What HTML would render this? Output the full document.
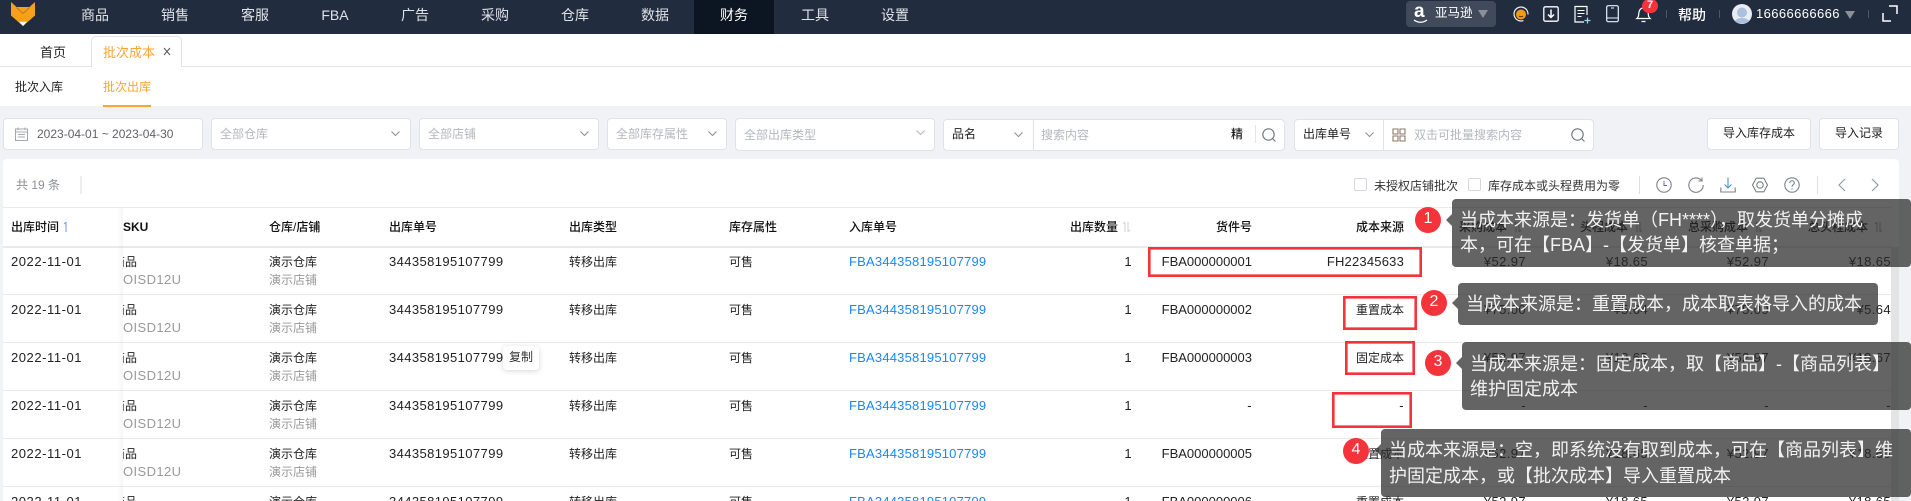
<!DOCTYPE html>
<html lang="zh">
<head>
<meta charset="utf-8">
<title>批次成本</title>
<style>
html,body{margin:0;padding:0;width:1911px;height:501px;overflow:hidden;background:#f0f2f5}
body{position:relative;font:12px "Liberation Sans","Noto Sans CJK SC",sans-serif;color:#222}
*{box-sizing:border-box}
.a{position:absolute;white-space:nowrap}
svg{position:absolute;display:block;overflow:visible}
#nav{position:absolute;left:0;top:0;width:1911px;height:34px;background:#212d3f}
#nav .m{position:absolute;top:0;width:80px;height:34px;line-height:31px;text-align:center;color:#dfe3e8;font-size:14px}
#nav .on{background:#0c1622;color:#fff}
.sep{position:absolute;width:1px;background:#4c5666}
.box{position:absolute;background:#fff;border:1px solid #dfe2e8;border-radius:4px}
.ph{color:#b4b7bd;line-height:16px}
.line{position:absolute;left:3px;width:1888px;height:1px;background:#e8eaee}
.row{position:absolute;left:0;width:1899px;height:48px;font-size:12px;overflow:hidden}
.row .t,.row .b,.row .r{position:absolute;white-space:nowrap;line-height:16px;top:7px}
.row .b{top:25px;color:#999}
.n{font-size:13px;letter-spacing:.4px}
.d{letter-spacing:.55px}
.row .z{letter-spacing:0}
.h{position:absolute;top:219px;line-height:16px;font-weight:500;color:#111;white-space:nowrap}
.link{color:#1c86f2;font-size:13px;letter-spacing:.2px}
.red{position:absolute;box-shadow:inset 0 0 0 2.6px #f5333a;z-index:6}
.call{position:absolute;background:rgba(40,40,40,.72);border-radius:4px;z-index:7;color:#f2f2f2;font-size:18px;line-height:25px;white-space:nowrap}
.call:before{content:"";position:absolute;left:-6px;top:var(--ty);border:6px solid transparent;border-left:0;border-right-color:rgba(40,40,40,.72)}
.dot{position:absolute;width:26px;height:26px;border-radius:50%;background:#f5333a;color:#fff;text-align:center;font-size:16px;line-height:24px;z-index:8}
</style>
</head>
<body>

<!-- NAV -->
<div id="nav">
<svg style="left:0;top:0" width="60" height="34" viewBox="0 0 60 34"><path d="M11 2l5.500 5h13L35 2v13.500L23 26 11 15.500z" fill="#f9a01b"/><path d="M16.500 7.500L23 13.500l6.500-6" fill="none" stroke="#b97a1c" stroke-width="1"/><path d="M19 21.800h8L23 26z" fill="#fff"/></svg>
<div class="m" style="left:55px">商品</div>
<div class="m" style="left:135px">销售</div>
<div class="m" style="left:215px">客服</div>
<div class="m" style="left:295px">FBA</div>
<div class="m" style="left:375px">广告</div>
<div class="m" style="left:455px">采购</div>
<div class="m" style="left:535px">仓库</div>
<div class="m" style="left:615px">数据</div>
<div class="m on" style="left:694px">财务</div>
<div class="m" style="left:775px">工具</div>
<div class="m" style="left:855px">设置</div>

<div class="a" style="left:1406px;top:1px;width:90px;height:26px;background:#414a5a;border-radius:4px"></div>
<div class="a" style="left:1414px;top:2px;font:700 19px/20px 'Liberation Sans',sans-serif;color:#fff">a</div>
<svg style="left:1413px;top:19px" width="16" height="5" viewBox="0 0 16 5"><path d="M1 1c4 3 9 3 13 0" fill="none" stroke="#fff" stroke-width="1.300"/></svg>
<div class="a" style="left:1435px;top:5px;line-height:17px;color:#fff;font-size:12.500px">亚马逊</div>
<svg style="left:1478px;top:10px" width="10" height="8" viewBox="0 0 10 8"><path d="M0 0h10L5 8z" fill="#8b9097"/></svg>

<svg style="left:1512px;top:5px" width="18" height="18" viewBox="0 0 18 18"><circle cx="9" cy="9" r="7" fill="none" stroke="#eee" stroke-width="1.200" stroke-dasharray="26 8" transform="rotate(150 9 9)"/><circle cx="9" cy="9.500" r="5" fill="#f59a14"/><path d="M7 11c1 1 3 1 4 0" stroke="#4a3205" fill="none"/></svg>
<svg style="left:1543px;top:6px" width="16" height="16" viewBox="0 0 16 16"><rect x=".8" y=".8" width="14.400" height="14.400" rx="1.500" fill="none" stroke="#fff" stroke-width="1.300"/><path d="M8 3.500v8M5 8.500l3 3 3-3" fill="none" stroke="#fff" stroke-width="1.500"/></svg>
<svg style="left:1574px;top:5px" width="17" height="19" viewBox="0 0 17 19"><path d="M13 10V1.500H1V17h9" fill="none" stroke="#fff" stroke-width="1.200"/><path d="M3.500 5.500h7M3.500 8.500h7M3.500 11.500h4" stroke="#fff"/><path d="M13.500 12.500v6M10.500 15.500h6" stroke="#9fd4f2" stroke-width="1.200"/></svg>
<svg style="left:1606px;top:5px" width="13" height="18" viewBox="0 0 13 18"><rect x=".7" y=".7" width="11.600" height="16" rx="1.500" fill="none" stroke="#e8f3fa" stroke-width="1.200"/><path d="M1 13h11M5 3h3" stroke="#e8f3fa"/></svg>
<svg style="left:1636px;top:5px" width="15" height="18" viewBox="0 0 15 18"><path d="M1 13.500c2-1.500 1.500-4 2-6.500 .6-2.800 2.500-4 4.500-4s3.900 1.200 4.500 4c.5 2.500 0 5 2 6.500z" fill="none" stroke="#fff" stroke-width="1.200"/><path d="M5.500 16.500h4" stroke="#fff" stroke-width="1.300"/></svg>
<div class="a" style="left:1642px;top:-1px;width:16px;height:14px;border-radius:8px;background:#f5333a;color:#fff;text-align:center;font-size:11px;font-weight:700;line-height:13px">7</div>

<div class="sep" style="left:1666px;top:10px;height:8px"></div>
<div class="a" style="left:1678px;top:6px;line-height:19px;color:#fff;font-size:14px;font-weight:500">帮助</div>
<div class="sep" style="left:1719px;top:10px;height:8px"></div>
<svg style="left:1732px;top:4px" width="20" height="20" viewBox="0 0 20 20"><circle cx="10" cy="10" r="10" fill="#e9edf3"/><circle cx="10" cy="8.500" r="5" fill="#a9c0de"/><path d="M3 17c2-4 12-4 14 0-3 3.500-11 3.500-14 0z" fill="#a9c0de"/></svg>
<div class="a" style="left:1756px;top:5px;line-height:17px;color:#fff;font-size:13px;letter-spacing:.4px">16666666666</div>
<svg style="left:1845px;top:11px" width="10" height="8" viewBox="0 0 10 8"><path d="M0 0h10L5 8z" fill="#8b9097"/></svg>
<div class="sep" style="left:1868px;top:10px;height:8px"></div>
<svg style="left:1882px;top:5px" width="16" height="17" viewBox="0 0 16 17"><path d="M7 1h8v8M9 16H1V8" fill="none" stroke="#fff" stroke-width="1.500"/></svg>
</div>

<!-- TAB BAR -->
<div class="a" style="left:0;top:34px;width:1911px;height:72px;background:#fff"></div>
<div class="a" style="left:0;top:66px;width:1911px;height:1px;background:#dfe2e8"></div>
<div class="a" style="left:91px;top:36px;width:91px;height:31px;background:#fff;border:1px solid #dfe2e8;border-bottom:0;border-radius:5px 5px 0 0"></div>
<div class="a" style="left:40px;top:44px;line-height:17px;font-size:13px;color:#222">首页</div>
<div class="a" style="left:103px;top:44px;line-height:17px;font-size:13px;color:#f9a62f">批次成本</div>
<svg style="left:163px;top:47px" width="8" height="9" viewBox="0 0 8 9"><path d="M1 1l6 7M7 1L1 8" stroke="#555" stroke-width="1"/></svg>
<div class="a" style="left:15px;top:79px;line-height:16px;color:#222">批次入库</div>
<div class="a" style="left:103px;top:79px;line-height:16px;color:#f9a62f">批次出库</div>
<div class="a" style="left:103px;top:105px;width:48px;height:2px;background:#f9a62f"></div>

<!-- FILTERS -->
<div class="box" style="left:3px;top:118px;width:200px;height:32px"></div>
<svg style="left:15px;top:127px" width="13" height="14" viewBox="0 0 13 14"><path d="M.5 2h12v11.500H.5zM.5 5h12M3 .5v2.500M10 .5v2.500M3 7.500h7M3 10h7" fill="none" stroke="#a5a8ae"/></svg>
<div class="a" style="left:37px;top:126px;line-height:16px;color:#606266">2023-04-01 ~ 2023-04-30</div>

<div class="box" style="left:211px;top:118px;width:200px;height:32px"></div>
<div class="a ph" style="left:220px;top:126px">全部仓库</div>
<svg style="left:391px;top:131px" width="9" height="6" viewBox="0 0 9 6"><path d="M.5.500l4 4 4-4" fill="none" stroke="#8e9197" stroke-width="1.100"/></svg>

<div class="box" style="left:419px;top:118px;width:180px;height:32px"></div>
<div class="a ph" style="left:428px;top:126px">全部店铺</div>
<svg style="left:580px;top:131px" width="9" height="6" viewBox="0 0 9 6"><path d="M.5.500l4 4 4-4" fill="none" stroke="#8e9197" stroke-width="1.100"/></svg>

<div class="box" style="left:607px;top:118px;width:120px;height:32px"></div>
<div class="a ph" style="left:616px;top:126px">全部库存属性</div>
<svg style="left:708px;top:131px" width="9" height="6" viewBox="0 0 9 6"><path d="M.5.500l4 4 4-4" fill="none" stroke="#8e9197" stroke-width="1.100"/></svg>

<div class="box" style="left:735px;top:118px;width:200px;height:33px"></div>
<div class="a ph" style="left:744px;top:127px">全部出库类型</div>
<svg style="left:916px;top:130px" width="9" height="6" viewBox="0 0 9 6"><path d="M.5.500l4 4 4-4" fill="none" stroke="#b4b7bd" stroke-width="1.100"/></svg>

<div class="box" style="left:943px;top:119px;width:342px;height:32px"></div>
<div class="a" style="left:1033px;top:119px;width:1px;height:32px;background:#dfe2e8"></div>
<div class="a" style="left:952px;top:126px;line-height:16px;color:#222">品名</div>
<svg style="left:1014px;top:132px" width="9" height="6" viewBox="0 0 9 6"><path d="M.5.500l4 4 4-4" fill="none" stroke="#8e9197" stroke-width="1.100"/></svg>
<div class="a ph" style="left:1041px;top:127px">搜索内容</div>
<div class="a" style="left:1231px;top:126px;line-height:16px;font-weight:500;color:#222">精</div>
<div class="a" style="left:1255px;top:125px;width:1px;height:18px;background:#e3e5ea"></div>
<svg style="left:1262px;top:128px" width="14" height="14" viewBox="0 0 14 14"><circle cx="6.500" cy="6.500" r="5.700" fill="none" stroke="#6f7378" stroke-width="1.100"/><path d="M10.500 10.500l3 3" stroke="#6f7378" stroke-width="1.100"/></svg>

<div class="box" style="left:1294px;top:119px;width:300px;height:32px"></div>
<div class="a" style="left:1383px;top:119px;width:1px;height:32px;background:#dfe2e8"></div>
<div class="a" style="left:1303px;top:126px;line-height:16px;color:#222">出库单号</div>
<svg style="left:1365px;top:132px" width="9" height="6" viewBox="0 0 9 6"><path d="M.5.500l4 4 4-4" fill="none" stroke="#8e9197" stroke-width="1.100"/></svg>
<svg style="left:1392px;top:128px" width="14" height="14" viewBox="0 0 14 14"><path d="M1 1h5v5H1zM8 1h5v5H8zM1 8h5v5H1zM8 8h5v5H8z" fill="none" stroke="#8a7a6a" stroke-width="1.100"/></svg>
<div class="a ph" style="left:1414px;top:127px">双击可批量搜索内容</div>
<svg style="left:1571px;top:128px" width="14" height="14" viewBox="0 0 14 14"><circle cx="6.500" cy="6.500" r="5.700" fill="none" stroke="#6f7378" stroke-width="1.100"/><path d="M10.500 10.500l3 3" stroke="#6f7378" stroke-width="1.100"/></svg>

<div class="box" style="left:1707px;top:118px;width:104px;height:32px;text-align:center;line-height:29px;color:#222">导入库存成本</div>
<div class="box" style="left:1819px;top:118px;width:80px;height:32px;text-align:center;line-height:29px;color:#222">导入记录</div>

<!-- CARD -->
<div class="a" style="left:3px;top:159px;width:1896px;height:342px;background:#fff;border-radius:4px 4px 0 0"></div>
<div class="a" style="left:16px;top:177px;line-height:16px;color:#8d8f94;font-size:12px">共 19 条</div>
<div class="a" style="left:80px;top:176px;width:2px;height:18px;background:#eceef1"></div>

<div class="a" style="left:1354px;top:178px;width:13px;height:13px;border:1px solid #d5d7dc;border-radius:2px;background:#fff"></div>
<div class="a" style="left:1374px;top:178px;line-height:16px;color:#333">未授权店铺批次</div>
<div class="a" style="left:1468px;top:178px;width:13px;height:13px;border:1px solid #d5d7dc;border-radius:2px;background:#fff"></div>
<div class="a" style="left:1488px;top:178px;line-height:16px;color:#333">库存成本或头程费用为零</div>
<div class="a" style="left:1639px;top:176px;width:1px;height:18px;background:#dcdfe4"></div>

<svg style="left:1656px;top:177px" width="16" height="16" viewBox="0 0 16 16"><circle cx="8" cy="8" r="7.200" fill="none" stroke="#7d8084" stroke-width="1.100"/><path d="M8 4v4.500h3" fill="none" stroke="#7a5c98"/></svg>
<svg style="left:1688px;top:177px" width="16" height="16" viewBox="0 0 16 16"><path d="M13.500 3.500A7.200 7.200 0 1 0 15.200 8M14 .5v3.500h-3.500" fill="none" stroke="#7d8084" stroke-width="1.100"/></svg>
<svg style="left:1720px;top:177px" width="16" height="16" viewBox="0 0 16 16"><path d="M8 .5v10M4.500 7.500L8 11l3.500-3.500" fill="none" stroke="#4d8fd6" stroke-width="1.100"/><path d="M.8 10.500v4.500h14.400v-4.500" fill="none" stroke="#7d8084" stroke-width="1.100"/></svg>
<svg style="left:1752px;top:177px" width="16" height="16" viewBox="0 0 16 16"><path d="M4.200 1.200h7.600L15.500 8l-3.700 6.800H4.200L.5 8z" fill="none" stroke="#7d8084" stroke-width="1.100"/><circle cx="8" cy="8" r="3.200" fill="none" stroke="#7d8084" stroke-width="1.100"/></svg>
<svg style="left:1784px;top:177px" width="16" height="16" viewBox="0 0 16 16"><circle cx="8" cy="8" r="7.200" fill="none" stroke="#7d8084" stroke-width="1.100"/><path d="M5.800 6c0-3 4.500-3 4.500 0 0 1.700-2.300 1.800-2.300 3.800M8 11.300v1.200" fill="none" stroke="#7d8084" stroke-width="1.100"/></svg>
<div class="a" style="left:1817px;top:176px;width:1px;height:18px;background:#dcdfe4"></div>
<svg style="left:1838px;top:178px" width="8" height="14" viewBox="0 0 8 14"><path d="M7 1L1 7l6 6" fill="none" stroke="#8b97a5" stroke-width="1.100"/></svg>
<svg style="left:1871px;top:178px" width="8" height="14" viewBox="0 0 8 14"><path d="M1 1l6 6-6 6" fill="none" stroke="#8b97a5" stroke-width="1.100"/></svg>

<!-- TABLE LINES -->
<div class="line" style="top:207px"></div>
<div class="line" style="top:246px;height:2px"></div>
<div class="line" style="top:294px"></div>
<div class="line" style="top:342px"></div>
<div class="line" style="top:390px"></div>
<div class="line" style="top:438px"></div>
<div class="line" style="top:486px"></div>

<!-- HEADER -->
<div class="h" style="left:11px">出库时间</div>
<svg style="left:63px;top:221px" width="5" height="12" viewBox="0 0 5 12"><path d="M3 1v10" stroke="#7aa8f2" stroke-width="1.200"/><path d="M3 1L1 3" stroke="#7aa8f2"/></svg>
<div class="h" style="left:123px;overflow:hidden;font-weight:700">SKU</div>
<div class="h" style="left:269px">仓库/店铺</div>
<div class="h" style="left:389px">出库单号</div>
<div class="h" style="left:569px">出库类型</div>
<div class="h" style="left:729px">库存属性</div>
<div class="h" style="left:849px">入库单号</div>
<div class="h" style="left:1070px">出库数量</div>
<svg style="left:1122px;top:221px" width="9" height="12" viewBox="0 0 9 12"><path d="M3 1v10M3 1L1 3M6 1v10M6 11l2-2" fill="none" stroke="#d4d6da" stroke-width="1.100"/></svg>
<div class="h" style="left:1216px">货件号</div>
<div class="h" style="left:1356px">成本来源</div>
<div class="h" style="left:1459px">采购成本</div>
<svg style="left:1513px;top:221px" width="9" height="12" viewBox="0 0 9 12"><path d="M3 1v10M3 1L1 3M6 1v10M6 11l2-2" fill="none" stroke="#aaa" stroke-width="1.100"/></svg>
<div class="h" style="left:1580px">头程成本</div>
<svg style="left:1634px;top:221px" width="9" height="12" viewBox="0 0 9 12"><path d="M3 1v10M3 1L1 3M6 1v10M6 11l2-2" fill="none" stroke="#aaa" stroke-width="1.100"/></svg>
<div class="h" style="left:1688px">总采购成本</div>
<svg style="left:1754px;top:221px" width="9" height="12" viewBox="0 0 9 12"><path d="M3 1v10M3 1L1 3M6 1v10M6 11l2-2" fill="none" stroke="#aaa" stroke-width="1.100"/></svg>
<div class="h" style="left:1808px">总头程成本</div>
<svg style="left:1874px;top:221px" width="9" height="12" viewBox="0 0 9 12"><path d="M3 1v10M3 1L1 3M6 1v10M6 11l2-2" fill="none" stroke="#aaa" stroke-width="1.100"/></svg>

<!-- ROW 1 -->
<div class="row" style="top:247px">
<span class="t n d" style="left:11px">2022-11-01</span>
<span class="t" style="left:113px">商品</span><span class="b n" style="left:123px">OISD12U</span>
<span class="t" style="left:269px">演示仓库</span><span class="b" style="left:269px">演示店铺</span>
<span class="t n" style="left:389px">344358195107799</span>
<span class="t" style="left:569px">转移出库</span>
<span class="t" style="left:729px">可售</span>
<span class="t link" style="left:849px">FBA344358195107799</span>
<span class="t n" style="right:767px">1</span>
<span class="t n z" style="right:647px">FBA000000001</span>
<span class="t n" style="right:495px;letter-spacing:.2px">FH22345633</span>
<span class="t n" style="right:373px">¥52.97</span><span class="t n" style="right:251px">¥18.65</span><span class="t n" style="right:130px">¥52.97</span><span class="t n" style="right:8px">¥18.65</span>
</div>
<!-- ROW 2 -->
<div class="row" style="top:295px">
<span class="t n d" style="left:11px">2022-11-01</span>
<span class="t" style="left:113px">商品</span><span class="b n" style="left:123px">OISD12U</span>
<span class="t" style="left:269px">演示仓库</span><span class="b" style="left:269px">演示店铺</span>
<span class="t n" style="left:389px">344358195107799</span>
<span class="t" style="left:569px">转移出库</span>
<span class="t" style="left:729px">可售</span>
<span class="t link" style="left:849px">FBA344358195107799</span>
<span class="t n" style="right:767px">1</span>
<span class="t n z" style="right:647px">FBA000000002</span>
<span class="t" style="right:495px">重置成本</span>
<span class="t n" style="right:373px">¥75.00</span><span class="t n" style="right:251px">¥5.64</span><span class="t n" style="right:130px">¥75.00</span><span class="t n" style="right:8px">¥5.64</span>
</div>
<!-- ROW 3 -->
<div class="row" style="top:343px">
<span class="t n d" style="left:11px">2022-11-01</span>
<span class="t" style="left:113px">商品</span><span class="b n" style="left:123px">OISD12U</span>
<span class="t" style="left:269px">演示仓库</span><span class="b" style="left:269px">演示店铺</span>
<span class="t n" style="left:389px">344358195107799</span>
<span class="t" style="left:569px">转移出库</span>
<span class="t" style="left:729px">可售</span>
<span class="t link" style="left:849px">FBA344358195107799</span>
<span class="t n" style="right:767px">1</span>
<span class="t n z" style="right:647px">FBA000000003</span>
<span class="t" style="right:495px">固定成本</span>
<span class="t n" style="right:373px">¥52.97</span><span class="t n" style="right:251px">¥18.65</span><span class="t n" style="right:130px">¥52.97</span><span class="t n" style="right:8px">¥18.67</span>
</div>
<!-- ROW 4 -->
<div class="row" style="top:391px">
<span class="t n d" style="left:11px">2022-11-01</span>
<span class="t" style="left:113px">商品</span><span class="b n" style="left:123px">OISD12U</span>
<span class="t" style="left:269px">演示仓库</span><span class="b" style="left:269px">演示店铺</span>
<span class="t n" style="left:389px">344358195107799</span>
<span class="t" style="left:569px">转移出库</span>
<span class="t" style="left:729px">可售</span>
<span class="t link" style="left:849px">FBA344358195107799</span>
<span class="t n" style="right:767px">1</span>
<span class="t n" style="right:647px">-</span>
<span class="t n" style="right:495px">-</span>
<span class="t n" style="right:373px">-</span><span class="t n" style="right:251px">-</span><span class="t n" style="right:130px">-</span><span class="t n" style="right:8px">-</span>
</div>
<!-- ROW 5 -->
<div class="row" style="top:439px">
<span class="t n d" style="left:11px">2022-11-01</span>
<span class="t" style="left:113px">商品</span><span class="b n" style="left:123px">OISD12U</span>
<span class="t" style="left:269px">演示仓库</span><span class="b" style="left:269px">演示店铺</span>
<span class="t n" style="left:389px">344358195107799</span>
<span class="t" style="left:569px">转移出库</span>
<span class="t" style="left:729px">可售</span>
<span class="t link" style="left:849px">FBA344358195107799</span>
<span class="t n" style="right:767px">1</span>
<span class="t n z" style="right:647px">FBA000000005</span>
<span class="t" style="right:495px">重置成本</span>
<span class="t n" style="right:373px">¥52.97</span><span class="t n" style="right:251px">¥18.65</span><span class="t n" style="right:130px">¥52.97</span><span class="t n" style="right:8px">¥18.65</span>
</div>
<!-- ROW 6 -->
<div class="row" style="top:487px;height:14px">
<span class="t n d" style="left:11px">2022-11-01</span>
<span class="t" style="left:113px">商品</span>
<span class="t" style="left:269px">演示仓库</span>
<span class="t n" style="left:389px">344358195107799</span>
<span class="t" style="left:569px">转移出库</span>
<span class="t" style="left:729px">可售</span>
<span class="t link" style="left:849px">FBA344358195107799</span>
<span class="t n" style="right:767px">1</span>
<span class="t n z" style="right:647px">FBA000000006</span>
<span class="t" style="right:495px">重置成本</span>
<span class="t n" style="right:373px">¥52.97</span><span class="t n" style="right:251px">¥18.65</span><span class="t n" style="right:130px">¥52.97</span><span class="t n" style="right:8px">¥18.65</span>
</div>

<!-- STICKY COLUMN -->
<div class="a" style="left:110px;top:248px;width:13px;height:253px;background:#fff;z-index:2"></div>
<div class="a" style="left:110px;top:294px;width:13px;height:1px;background:#e8eaee;z-index:2"></div>
<div class="a" style="left:110px;top:342px;width:13px;height:1px;background:#e8eaee;z-index:2"></div>
<div class="a" style="left:110px;top:390px;width:13px;height:1px;background:#e8eaee;z-index:2"></div>
<div class="a" style="left:110px;top:438px;width:13px;height:1px;background:#e8eaee;z-index:2"></div>
<div class="a" style="left:110px;top:486px;width:13px;height:1px;background:#e8eaee;z-index:2"></div>
<div class="a" style="left:117px;top:208px;width:6px;height:293px;background:linear-gradient(90deg,rgba(0,0,0,0),rgba(0,0,0,.04));z-index:3"></div>

<!-- COPY TOOLTIP -->
<div class="a" style="left:503px;top:346px;width:36px;height:24px;background:#fff;border-radius:4px;box-shadow:0 1px 6px rgba(0,0,0,.16);z-index:4;text-align:center;line-height:22px;color:#333">复制</div>

<!-- SCROLLBAR -->
<div class="a" style="left:1891px;top:247px;width:8px;height:254px;background:#e4e4e4;z-index:5"></div>

<!-- RED RECTS -->
<div class="red" style="left:1148px;top:247px;width:274px;height:30px"></div>
<div class="red" style="left:1343px;top:296px;width:74px;height:34px"></div>
<div class="red" style="left:1345px;top:341px;width:70px;height:34px"></div>
<div class="red" style="left:1332px;top:392px;width:80px;height:36px"></div>

<!-- CALLOUTS -->
<div class="dot" style="left:1415px;top:207px">1</div>
<div class="call" style="left:1452px;top:199px;width:459px;height:68px;--ty:15px;padding:9px 0 0 8px">当成本来源是：发货单（FH****），取发货单分摊成<br>本，可在【FBA】-【发货单】核查单据；</div>

<div class="dot" style="left:1421px;top:290px">2</div>
<div class="call" style="left:1458px;top:283px;width:420px;height:42px;--ty:14px;padding:9px 0 0 8px">当成本来源是：重置成本，成本取表格导入的成本</div>

<div class="dot" style="left:1425px;top:350px">3</div>
<div class="call" style="left:1462px;top:342px;width:449px;height:68px;--ty:15px;padding:10px 0 0 8px">当成本来源是：固定成本，取【商品】-【商品列表】<br>维护固定成本</div>

<div class="dot" style="left:1343px;top:438px">4</div>
<div class="call" style="left:1381px;top:429px;width:530px;height:68px;--ty:15px;padding:8px 0 0 8px;line-height:26px">当成本来源是：空，即系统没有取到成本，可在【商品列表】维<br>护固定成本，或【批次成本】导入重置成本</div>

</body>
</html>
